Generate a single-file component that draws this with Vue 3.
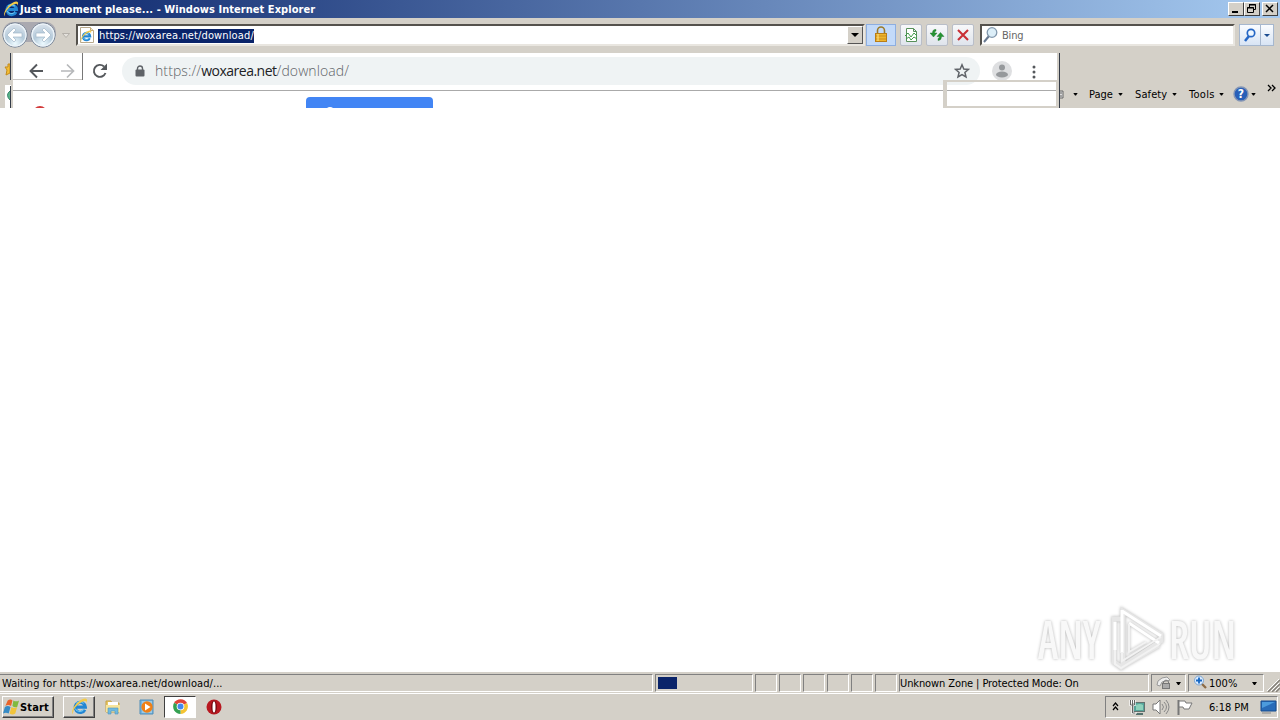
<template>
  <div class="screen">
    <!-- title bar -->
    <header class="title-bar">
      <svg class="title-icon" viewBox="0 0 16 16"><use href="#ie" /></svg>
      <span class="title-text">Just a moment please... - Windows Internet Explorer</span>
      <div class="window-buttons">
        <button class="win-btn"><svg viewBox="0 0 14 12"><path d="M3 8h6v2H3z" /></svg></button>
        <button class="win-btn"><svg viewBox="0 0 14 12"><path d="M4.500 1.500h6v5h-2M4.500 1v3M4 2h7M2.500 4.500h6v5h-6zM2 5h7" fill="none" stroke="#000" /></svg></button>
        <button class="win-btn close"><svg viewBox="0 0 14 12"><path d="M3 2l7 7M10 2L3 9" stroke="#000" stroke-width="1.500" /></svg></button>
      </div>
    </header>

    <!-- address row -->
    <div class="nav-row">
      <svg class="travel" viewBox="0 0 74 30">
        <rect x="3" y="4" width="53" height="20" rx="10" fill="#aaa9b0" />
        <g v-for="x in [15, 43]" :key="x">
          <circle :cx="x" cy="17" r="12.200" fill="url(#orb)" stroke="#778293" />
          <circle :cx="x" cy="17" r="11" fill="none" stroke="#edf4f9" stroke-width="1.200" />
        </g>
        <path d="M14 10l-7 7 7 7 2-2-3-3h9v-4h-9l3-3zM44 10l7 7-7 7-2-2 3-3h-9v-4h9l-3-3z" fill="#fff" stroke="#a3b7c8" stroke-width=".7" />
        <path d="M62.500 15.500h7l-3.500 4z" fill="#e4e1dc" stroke="#aaa6a0" stroke-width=".8" />
      </svg>
      <div class="address">
        <svg class="page-icon" viewBox="0 0 16 16">
          <path d="M1.500.5h10l3 3v12h-13z" fill="#fff" stroke="#b8a98c" />
          <path d="M11.500.5v3h3" fill="#f3e6c4" stroke="#c8ac72" />
          <svg x="1" y="3" width="12" height="12" viewBox="0 0 16 16"><use href="#ie" /></svg>
        </svg>
        <span class="selected">https://woxarea.net/download/</span>
        <button class="drop"><svg viewBox="0 0 14 14"><path d="M3 5h8L7 9z" /></svg></button>
      </div>
      <button class="lock-btn">
        <svg viewBox="0 0 16 18">
          <path d="M4.500 8V4.500a3.500 3.500 0 017 0V8" fill="none" stroke="#9b7a28" stroke-width="1.600" />
          <rect x="2.500" y="7.500" width="11" height="8" fill="#efb62c" stroke="#b87d18" />
          <path d="M3 10h10M3 13h10" stroke="#c98c1f" />
          <path d="M5 8v7" stroke="#ffe68b" />
        </svg>
      </button>
      <button class="tool-btn">
        <svg viewBox="0 0 20 20"><path d="M5.500 3.500h7l3 3v10h-10zM12.500 3.500v3h3" fill="#fff" stroke="#57905a" /><path d="M4 11l3-3 3 4 3-4 3 3M5 14l3-2 2 3 3-3 3 2" fill="none" stroke="#3f9a48" /></svg>
      </button>
      <button class="tool-btn">
        <svg viewBox="0 0 20 20"><path d="M9 4.500Q5.500 4 5.500 8H3l3.500 4L10 8H7.500q0-2 1.500-2zM11 15.500q3.500 0 3.500-4H17l-3.500-4-3.500 4h2.500q0 2-1.500 2z" fill="#249432" stroke="#176f23" stroke-width=".4" /></svg>
      </button>
      <button class="tool-btn">
        <svg viewBox="0 0 20 20"><path d="M5 5l10 10M15 5L5 15" stroke="#c92f36" stroke-width="2.100" /></svg>
      </button>
      <div class="search">
        <svg viewBox="0 0 18 18"><path d="M7 10l-5 6" stroke="#687990" stroke-width="2" /><circle cx="10" cy="6.500" r="4.800" fill="#dceef8" stroke="#8298ad" stroke-width="1.300" /></svg>
        <span>Bing</span>
      </div>
      <div class="go">
        <svg viewBox="0 0 34 22"><path d="M9 12l-4 5" stroke="#2466c5" stroke-width="2.500" /><circle cx="11" cy="9" r="3.700" fill="#eef7ff" stroke="#2466c5" stroke-width="1.700" /><path d="M20.500 0v22" stroke="#a6b7ce" /><path d="M24 10h6l-3 3z" fill="#1c4c91" /></svg>
      </div>
    </div>

    <!-- command bar -->
    <div class="command-row">
      <div class="commands">
        <svg class="printer" viewBox="0 0 8 12"><path d="M0 3h5v7H0M1 5h3M1 8h3" fill="#ddd" stroke="#666" /></svg>
        <i class="arrow"></i>
        <template v-for="item in commands" :key="item">
          <span class="command">{{ item }}</span><i class="arrow"></i>
        </template>
        <svg class="help" viewBox="0 0 16 16"><circle cx="8" cy="8" r="7" fill="#285fb8" stroke="#8495b5" stroke-width="1.400" /><text x="8" y="12" text-anchor="middle">?</text></svg>
        <i class="arrow"></i>
        <svg class="more" viewBox="0 0 9 8"><path d="M1 1l3 3-3 3M5 1l3 3-3 3" fill="none" stroke="#000" stroke-width="1.300" /></svg>
      </div>

      <!-- leftover browser window painted over the toolbar -->
      <div class="left-scraps">
        <svg viewBox="0 0 14 55"><path d="M10 11H8v3H5l2 3-1 5 4-2z" fill="#f4bd35" stroke="#c28b1c" /><path d="M5 32h6v23H5z" fill="#fff" /><path d="M10 38q-5 4 0 9" fill="#58b58a" stroke="#347f68" /><path d="M10.500 0v27M10.500 33v22" stroke="#333b48" /></svg>
      </div>
      <div class="ghost">
        <div class="ghost-bar">
          <svg class="ghost-nav" viewBox="0 0 110 36">
            <path d="M0 26.500h70" stroke="#c7c5c2" /><path d="M69.500 0v27" stroke="#777" />
            <path d="M30 18H17.500m6.500-6.500L17.500 18l6.500 6.500" fill="none" stroke="#55585c" stroke-width="1.900" />
            <path d="M48 18h12.500M54 11.500l6.500 6.500-6.500 6.500" fill="none" stroke="#b6b8ba" stroke-width="1.700" />
            <path d="M91 13.500A6 6 0 1 0 92.500 20" fill="none" stroke="#55585c" stroke-width="1.900" /><path d="M94 10.500v6.500h-6.500z" fill="#55585c" />
          </svg>
          <div class="omnibox">
            <svg class="padlock" viewBox="0 0 10 12"><path d="M2.500 5V3.500a2.500 2.500 0 015 0V5" fill="none" stroke="#5f6368" stroke-width="1.400" /><rect x=".5" y="4.500" width="9" height="7" rx="1" fill="#5f6368" /></svg>
            <span class="ghost-url">https://<b>woxarea.net</b>/download/</span>
            <svg class="star" viewBox="0 0 16 16"><path d="M8 1.800l1.800 4.200 4.600.4-3.500 3 1.100 4.500L8 11.500l-4 2.400 1.100-4.500-3.500-3L6.200 6z" fill="none" stroke="#5f6368" stroke-width="1.500" /></svg>
          </div>
          <svg class="avatar" viewBox="0 0 20 20"><circle cx="10" cy="10" r="10" fill="#dedfe1" /><circle cx="10" cy="6.500" r="3" fill="#96999c" /><ellipse cx="10" cy="13.500" rx="6" ry="3" fill="#96999c" /></svg>
          <svg class="dots" viewBox="0 0 4 14"><circle v-for="y in [2, 7, 12]" :key="y" cx="2" :cy="y" r="1.500" fill="#55585c" /></svg>
        </div>
        <div class="ghost-body">
          <i class="red-dot"></i>
          <div class="blue-tab"><i></i></div>
        </div>
        <div class="ghost-box"></div>
      </div>
    </div>

    <!-- page -->
    <main class="viewport">
      <div class="watermark">
        <span>ANY</span>
        <svg viewBox="0 0 62 66">
          <path d="M18 5l38 24v6L18 60zM16 13H9v43l7 5 38-22" fill="none" stroke="#e6e6e6" stroke-width="5" />
          <path d="M17 5l39 25M17 4v43M10 16v28M24 17l30 20" fill="none" stroke="#fff" stroke-width="3" />
          <path d="M56 31L17 55v-9M10 44v14l6 4 39-24M24 18v28l17-10" fill="none" stroke="#f2f2f2" stroke-width="2" />
        </svg>
        <span>RUN</span>
      </div>
    </main>

    <!-- status bar -->
    <div class="status-bar">
      <div class="pane message">Waiting for https://woxarea.net/download/...</div>
      <div class="pane progress"><i></i></div>
      <div v-for="n in 6" :key="n" class="pane small"></div>
      <div class="pane zone">Unknown Zone | Protected Mode: On</div>
      <div class="pane privacy">
        <svg viewBox="0 0 18 16"><path d="M2 10l1-4 4-3 5-1 3 3-3 1-5 1-2 4z" fill="#eee" stroke="#999" /><path d="M8.500 8V6.500q2.500-3 5 0V8" fill="none" stroke="#777" /><rect x="7.500" y="8.500" width="7" height="5" fill="#aaa" stroke="#777" /></svg>
        <i class="arrow"></i>
      </div>
      <div class="pane zoom">
        <svg viewBox="0 0 15 15"><path d="M8 8l5 5" stroke="#8d6b45" stroke-width="2.300" /><circle cx="6" cy="5.500" r="4.500" fill="#dcecff" stroke="#7ba4d0" /><path d="M3 5.500h6M6 2.500v6" stroke="#1567c3" stroke-width="1.800" /></svg>
        <span>100%</span><i class="arrow"></i>
      </div>
      <svg class="grip" viewBox="0 0 13 13"><path d="M1 13L13 1M5 13l8-8M9 13l4-4" stroke="#858079" stroke-width="1.500" /><path d="M0 12L12 0M4 12l8-8M8 12l4-4" stroke="#fff" /></svg>
    </div>

    <!-- taskbar -->
    <footer class="taskbar">
      <button class="start">
        <svg viewBox="0 0 18 18"><path d="M5 2q3-2 5 0L8.500 8q-3-2-6 0z" fill="#e8642b" /><path d="M11 2q3 2 6 0l-2 7q-3 1-5-1z" fill="#80b940" /><path d="M2 9q3-2 6 0l-2 7q-3-2-6 0z" fill="#368bc5" /><path d="M9 9q3 2 6 0l-2 7q-3 2-6 0z" fill="#f1c43b" /></svg>
        <b>Start</b>
      </button>
      <div class="task ie"><svg viewBox="0 0 16 16"><use href="#ie" /></svg></div>
      <svg class="folder" viewBox="0 0 16 16"><path d="M1 2h5l1 2h7v9H1z" fill="#e9c965" stroke="#c5a147" /><path d="M3 3h10v5H3z" fill="#fff" /><path d="M1 6h14v7H1z" fill="#f7e49a" /><path d="M3 15V9h10v6h-3v-3H6v3z" fill="#70b9df" stroke="#4f94bd" stroke-width=".6" /></svg>
      <svg class="media" viewBox="0 0 16 16"><path d="M1 1h13v14H1z" fill="#75b5df" stroke="#508eb9" /><path d="M3 2h10v12H3z" fill="#9bc9e6" /><circle cx="8" cy="8" r="5.700" fill="#ef8017" /><path d="M6 4.500l5.500 3.500L6 11.500z" fill="#fff" /></svg>
      <div class="task chrome">
        <svg viewBox="0 0 16 16"><path d="M8 8L2 4.500A7 7 0 0114.200 4.800z" fill="#e04438" /><path d="M8 8l6.200-3.200A7 7 0 018 15z" fill="#f5c433" /><path d="M8 8v7A7 7 0 012 4.500z" fill="#35a152" /><circle cx="8" cy="8" r="3.600" fill="#fff" /><circle cx="8" cy="8" r="2.800" fill="#4388ed" /></svg>
      </div>
      <svg class="opera" viewBox="0 0 16 16"><circle cx="8" cy="8" r="7.500" fill="#b81820" /><ellipse cx="8" cy="8" rx="3" ry="6.500" fill="#790a10" /><ellipse cx="8" cy="8" rx="1.500" ry="5.500" fill="#fff" /></svg>
      <div class="tray">
        <svg class="chevrons" viewBox="0 0 7 9"><path d="M1 4l2.500-3L6 4M1 8l2.500-3L6 8" fill="none" stroke="#000" stroke-width="1.200" /></svg>
        <svg class="network" viewBox="0 0 16 16"><rect x="4.500" y="3.500" width="11" height="9" fill="#55a49a" stroke="#65716f" /><path d="M7 6q4-2 7 0v5H7z" fill="#8fd1bb" /><path d="M7 15h7" stroke="#55706d" stroke-width="2" /><path d="M1.500 1v5h4V1M3.500 6v8h4M3.500 1v3" fill="none" stroke="#fff" stroke-width="2.200" /><path d="M1.500 1v5h4V1M3.500 1v13h3" fill="none" stroke="#656565" /></svg>
        <svg class="speaker" viewBox="0 0 18 16"><path d="M1 5h3l4-4v14l-4-4H1z" fill="#fff" stroke="#777" /><path d="M10 5q3 3 0 6M12 3q5 5 0 10M14 1q6 7 0 14" fill="none" stroke="#888" /></svg>
        <svg class="flag" viewBox="0 0 17 16"><path d="M2.500 1v15" stroke="#777" stroke-width="2" /><path d="M3 2h6l1 2h6l-3 6H8L7 8H3z" fill="#fff" stroke="#777" /></svg>
        <span class="clock">6:18 PM</span>
        <svg class="monitor" viewBox="0 0 17 14"><path d="M1 1h15v10H1z" fill="#286bb8" stroke="#174c8e" /><path d="M2 2h13L2 8z" fill="#4c9bdd" /><path d="M2 13h9" stroke="#888" /></svg>
      </div>
    </footer>

    <svg class="defs" width="0" height="0">
      <defs>
        <radialGradient id="orb" cx="50%" cy="85%" r="80%"><stop offset="0" stop-color="#edfaff" /><stop offset=".5" stop-color="#b4cada" /><stop offset="1" stop-color="#dce4ed" /></radialGradient>
        <symbol id="ie" viewBox="0 0 16 16">
          <path d="M13 11A4.800 4.800 0 1 1 13.500 8.500H5" fill="none" stroke="#2386d3" stroke-width="3" />
          <path d="M12 10.500A4.500 4.500 0 0 1 4 10M5 5q3-3 7 0" fill="none" stroke="#70c9f4" stroke-width="1" />
          <path d="M2 15.500C-1 13 4 5 10 1.500q4-2 5 0 .5 1-1 3.500 1-3-2-2-4 1-8 6-3 4-2 6.500z" fill="#f4cb48" />
        </symbol>
      </defs>
    </svg>
  </div>
</template>

<script setup>
const commands = ['Page', 'Safety', 'Tools']
</script>

<style>
body {
  margin: 0;
  overflow: hidden;
}
</style>

<style scoped>
* {
  box-sizing: border-box;
}
.screen {
  width: 1280px;
  height: 720px;
  display: flex;
  flex-direction: column;
  background: #d4d0c8;
  color: #000;
  font: 11px/14px "DejaVu Sans Condensed", "DejaVu Sans", sans-serif;
  overflow: hidden;
}
svg {
  display: block;
  flex: none;
}
button {
  padding: 0;
  font: inherit;
}
.defs {
  position: absolute;
}
.title-bar {
  height: 18px;
  flex: none;
  display: flex;
  align-items: center;
  padding: 0 2px 0 3px;
  color: #fff;
  background: linear-gradient(90deg, #0a246a, #a6caf0);
}
.title-icon {
  width: 16px;
  height: 16px;
}
.title-text {
  margin-left: 1px;
  padding-top: 1px;
  font-weight: bold;
  letter-spacing: 0.05px;
  white-space: nowrap;
}
.window-buttons {
  display: flex;
  margin-left: auto;
}
.win-btn {
  width: 16px;
  height: 14px;
  background: #d4d0c8;
  border: 1px solid;
  border-color: #fff #404040 #404040 #fff;
}
.win-btn svg {
  width: 14px;
  height: 12px;
}
.close {
  margin-left: 2px;
}
.nav-row {
  height: 35px;
  flex: none;
  display: flex;
  align-items: flex-start;
  padding: 6px 6px 0 0;
}
.travel {
  width: 74px;
  height: 30px;
  margin: -6px 2px 0 0;
}
.address,
.search {
  height: 22px;
  display: flex;
  align-items: center;
  background: #fff;
  border: 2px solid;
  border-color: #55524d #e9e6e0 #e9e6e0 #55524d;
}
.address {
  width: 789px;
  padding-left: 1px;
}
.page-icon {
  width: 16px;
  height: 16px;
}
.selected {
  height: 14px;
  margin: 1px 0 0 3px;
  padding-left: 1px;
  background: #0a246a;
  color: #fff;
  line-height: 14px;
  letter-spacing: 0.13px;
}
.drop {
  width: 16px;
  height: 18px;
  margin-left: auto;
  background: #d4d0c8;
  border: 1px solid;
  border-color: #fff #555 #555 #fff;
}
.drop svg {
  width: 14px;
  height: 14px;
}
.lock-btn {
  width: 30px;
  height: 22px;
  margin-left: 1px;
  background: #c3daf9;
  border: 1px solid #8daee0;
}
.lock-btn svg {
  width: 16px;
  height: 18px;
  margin: 0 6px;
}
.tool-btn {
  width: 22px;
  height: 22px;
  margin-left: 4px;
  background: linear-gradient(#f7f8fa, #dfe4ec);
  border: 1px solid #b9bec8;
  border-radius: 2px;
}
.tool-btn svg {
  width: 20px;
  height: 20px;
}
.search {
  width: 255px;
  margin-left: 6px;
  color: #666;
}
.search svg {
  width: 18px;
  height: 18px;
  margin-right: 2px;
}
.search span {
  padding-top: 2px;
  letter-spacing: -0.2px;
}
.go {
  width: 35px;
  height: 22px;
  margin-left: 4px;
  background: linear-gradient(#fafcff, #d8e4f4);
  border: 1px solid #a6b7ce;
}
.go svg {
  width: 34px;
  height: 22px;
  margin-top: -1px;
}
.command-row {
  position: relative;
  height: 55px;
  flex: none;
  display: flex;
}
.commands {
  width: 222px;
  margin: 27px 4px 0 auto;
  height: 28px;
  display: flex;
  align-items: center;
}
.printer {
  width: 8px;
  height: 12px;
  margin: 0 6px 0 4px;
}
.arrow {
  width: 5px;
  height: 3px;
  margin: 0 1px;
  background: #000;
  clip-path: polygon(0 0, 100% 0, 60% 100%, 40% 100%);
  flex: none;
}
.command {
  width: 25px;
  margin: 1px 3px 0 10px;
  white-space: nowrap;
}
.command:nth-of-type(2) {
  width: 32px;
  margin-left: 11px;
  margin-right: 4px;
  letter-spacing: 0.1px;
}
.command:nth-of-type(3) {
  width: 26px;
  letter-spacing: 0.3px;
  margin-left: 11px;
}
.help {
  width: 16px;
  height: 16px;
  margin: 0 1px 0 8px;
}
.help text {
  fill: #fff;
  font-weight: bold;
  font-size: 12px;
}
.more {
  width: 9px;
  height: 8px;
  margin: -12px 0 0 auto;
}
.left-scraps {
  position: absolute;
  left: 0;
  top: 0;
}
.left-scraps svg {
  width: 14px;
  height: 55px;
}
.ghost {
  position: absolute;
  left: 13px;
  top: 0;
  width: 1047px;
  height: 55px;
  background: #fff;
  border-right: 1px solid #333a46;
  box-shadow: inset -2px 0 #d4d0c8;
  overflow: hidden;
}
.ghost-bar {
  height: 38px;
  display: flex;
  align-items: center;
  border-bottom: 1px solid #aaa;
}
.ghost-nav {
  width: 110px;
  height: 36px;
  margin-bottom: 1px;
}
.omnibox {
  width: 858px;
  height: 28px;
  margin: 0 0 2px -1px;
  padding: 0 10px 0 13px;
  display: flex;
  align-items: center;
  background: #eff3f4;
  border-radius: 14px;
}
.padlock {
  width: 10px;
  height: 12px;
}
.ghost-url {
  margin-left: 10px;
  color: #5f6468;
  font: 300 14px/18px "Open Sans", sans-serif;
  letter-spacing: 0.1px;
}
.ghost-url b {
  color: #202124;
  font-weight: 400;
  letter-spacing: -0.5px;
}
.star {
  width: 16px;
  height: 16px;
  margin-left: auto;
}
.avatar {
  width: 20px;
  height: 20px;
  margin: 0 0 2px 12px;
}
.dots {
  width: 4px;
  height: 14px;
  margin-left: 20px;
}
.ghost-body {
  height: 17px;
  display: flex;
  overflow: hidden;
}
.red-dot {
  width: 14px;
  height: 14px;
  margin: 15px 0 0 20px;
  flex: none;
  border-radius: 50%;
  background: #d33b3b;
}
.blue-tab {
  width: 127px;
  height: 20px;
  margin: 6px 0 0 259px;
  background: #4285f4;
  border-radius: 4px 4px 0 0;
  flex: none;
}
.blue-tab i {
  display: block;
  width: 10px;
  height: 10px;
  margin: 10px 0 0 19px;
  border-radius: 50%;
  background: #fff;
}
.blue-tab::before {
  content: "";
  display: table;
}
.ghost-box {
  position: absolute;
  left: 930px;
  top: 27px;
  width: 116px;
  height: 28px;
  border: 3px solid #d4d0c8;
  border-width: 2px 3px 2px 4px;
}
.viewport {
  height: 564px;
  flex: none;
  display: flex;
  justify-content: flex-end;
  align-items: flex-end;
  background: #fff;
}
.watermark {
  display: flex;
  align-items: center;
  margin-right: 46px;
  filter: drop-shadow(0 0 1.5px #b5b5b5);
}
.watermark svg {
  width: 62px;
  height: 66px;
  margin: 0 2px 0 2px;
}
.watermark span {
  width: 64px;
  margin-right: 1px;
  color: #f8f8f8;
  font: 52px/50px "Open Sans", sans-serif;
  font-stretch: 75%;
  font-weight: 600;
  transform: scaleX(0.8);
  transform-origin: left center;
  white-space: nowrap;
}
.status-bar {
  height: 22px;
  flex: none;
  display: flex;
  align-items: center;
  border-bottom: 1px solid #fff;
}
.pane {
  height: 18px;
  margin-right: 2px;
  padding: 2px 0 0 1px;
  flex: none;
  display: flex;
  align-items: center;
  border: 1px solid;
  border-color: #808080 #fff #fff #808080;
  white-space: nowrap;
}
.message {
  width: 653px;
  border-left: 0;
  padding-left: 2px;
  letter-spacing: 0.07px;
}
.progress {
  width: 98px;
  padding-top: 0;
}
.progress i {
  width: 19px;
  height: 12px;
  margin-left: 1px;
  background: #0a246a;
}
.small {
  width: 22px;
}
.zone {
  width: 250px;
  padding-left: 0;
  letter-spacing: -0.1px;
}
.privacy {
  width: 35px;
}
.privacy svg {
  width: 18px;
  height: 16px;
  margin: -1px 2px 0 2px;
}
.zoom {
  width: 76px;
}
.zoom svg {
  width: 15px;
  height: 15px;
  margin: -3px 1px 0 3px;
}
.zoom .arrow {
  margin-left: auto;
  margin-right: 6px;
}
.grip {
  width: 13px;
  height: 13px;
  margin: 6px 0 0 auto;
}
.taskbar {
  height: 26px;
  flex: none;
  display: flex;
  align-items: center;
  padding: 0 2px;
}
.start {
  width: 52px;
  height: 22px;
  display: flex;
  align-items: center;
  background: #d4d0c8;
  border: 1px solid;
  border-color: #fff #404040 #404040 #fff;
  box-shadow: inset -1px -1px #808080;
}
.start svg {
  width: 17px;
  height: 18px;
}
.start b {
  padding-top: 1px;
  letter-spacing: 0.15px;
}
.task {
  width: 32px;
  height: 22px;
  padding: 1px 7px;
  border: 1px solid;
}
.task svg {
  width: 17px;
  height: 17px;
}
.ie {
  margin-left: 9px;
  border-color: #fff #404040 #404040 #fff;
  box-shadow: inset -1px -1px #808080;
}
.chrome {
  margin-left: 9px;
  background: #fff;
  border-color: #404040 #fff #fff #404040;
}
.folder,
.media,
.opera {
  width: 16px;
  height: 16px;
  margin-left: 10px;
}
.media {
  margin-left: 18px;
}
.tray {
  width: 173px;
  height: 22px;
  margin-left: auto;
  padding-left: 6px;
  display: flex;
  align-items: center;
  border: 1px solid;
  border-color: #808080 #fff #fff #808080;
}
.chevrons {
  width: 7px;
  height: 9px;
  margin: -2px 10px 0 0;
}
.network {
  width: 16px;
  height: 16px;
}
.speaker {
  width: 18px;
  height: 16px;
  margin-left: 7px;
}
.flag {
  width: 17px;
  height: 16px;
  margin-left: 6px;
}
.clock {
  margin-left: 16px;
  padding-top: 1px;
  white-space: nowrap;
}
.monitor {
  width: 17px;
  height: 14px;
  margin-left: auto;
}
</style>
